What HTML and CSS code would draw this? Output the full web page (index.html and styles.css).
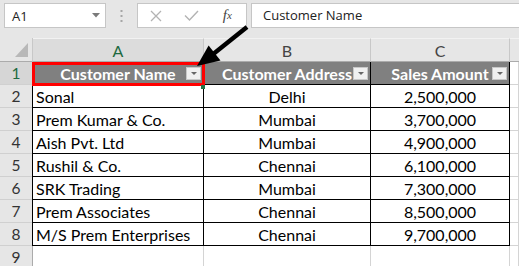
FILE: index.html
```html
<!DOCTYPE html>
<html>
<head>
<meta charset="utf-8">
<link rel="stylesheet" href="styles.css">
</head>
<body>
<div class="app">
  <div class="toolbar">
    <div class="namebox">
      <span>A1</span>
      <svg class="caret" width="8" height="5" viewBox="0 0 8 5"><path d="M0 0h8L4 4.5z" fill="#7a7a7a"/></svg>
    </div>
    <div class="dots">
      <svg width="3" height="12" viewBox="0 0 3 12"><rect x="0.5" y="0" width="2" height="2" fill="#a6a6a6"/><rect x="0.5" y="5" width="2" height="2" fill="#a6a6a6"/><rect x="0.5" y="10" width="2" height="2" fill="#a6a6a6"/></svg>
    </div>
    <div class="fxbtns">
      <span class="btn"><svg width="12" height="12" viewBox="0 0 12 12"><path d="M1 1L11 11M11 1L1 11" stroke="#b3b3b3" stroke-width="1.3" fill="none"/></svg></span>
      <span class="btn"><svg width="15" height="11" viewBox="0 0 15 11"><path d="M1 5.5L5.5 10L14 1" stroke="#b3b3b3" stroke-width="1.4" fill="none"/></svg></span>
      <span class="btn fx">f<sub>x</sub></span>
    </div>
    <div class="formula">Customer Name</div>
  </div>

  <div class="sheet">
    <div class="corner"></div>
    <div class="colhdr sel">A</div>
    <div class="colhdr">B</div>
    <div class="colhdr">C</div>
    <div class="colhdr last"></div>

    <div class="rowhdr sel">1</div>
    <div class="th">Customer Name<span class="dd"></span></div>
    <div class="th">Customer Address<span class="dd"></span></div>
    <div class="th">Sales Amount<span class="dd"></span></div>
    <div class="cell"></div>

    <div class="rowhdr">2</div>
    <div class="td a">Sonal</div>
    <div class="td b">Delhi</div>
    <div class="td c">2,500,000</div>
    <div class="cell"></div>

    <div class="rowhdr">3</div>
    <div class="td a">Prem Kumar &amp; Co.</div>
    <div class="td b">Mumbai</div>
    <div class="td c">3,700,000</div>
    <div class="cell"></div>

    <div class="rowhdr">4</div>
    <div class="td a">Aish Pvt. Ltd</div>
    <div class="td b">Mumbai</div>
    <div class="td c">4,900,000</div>
    <div class="cell"></div>

    <div class="rowhdr">5</div>
    <div class="td a">Rushil &amp; Co.</div>
    <div class="td b">Chennai</div>
    <div class="td c">6,100,000</div>
    <div class="cell"></div>

    <div class="rowhdr">6</div>
    <div class="td a">SRK Trading</div>
    <div class="td b">Mumbai</div>
    <div class="td c">7,300,000</div>
    <div class="cell"></div>

    <div class="rowhdr">7</div>
    <div class="td a">Prem Associates</div>
    <div class="td b">Chennai</div>
    <div class="td c">8,500,000</div>
    <div class="cell"></div>

    <div class="rowhdr">8</div>
    <div class="td a">M/S Prem Enterprises</div>
    <div class="td b">Chennai</div>
    <div class="td c">9,700,000</div>
    <div class="cell"></div>

    <div class="rowhdr">9</div>
    <div class="cell"></div>
    <div class="cell"></div>
    <div class="cell"></div>
    <div class="cell"></div>
  </div>

  <div class="redbox"></div>
  <div class="handle"></div>
  <svg class="arrow" width="519" height="266" viewBox="0 0 519 266">
    <line x1="247" y1="27" x2="212" y2="55" stroke="#000" stroke-width="4.5"/>
    <polygon points="197,66 208.6,45.5 220.5,60.5" fill="#000"/>
  </svg>
</div>
</body>
</html>
```

FILE: styles.css
```css
* { box-sizing: border-box; }

body {
  margin: 0;
  background: #e6e6e6;
  font-family: "Open Sans", "Noto Sans", sans-serif;
}

.app {
  position: relative;
  width: 519px;
  height: 266px;
  overflow: hidden;
  background: #e6e6e6;
}

/* ---------- formula bar ---------- */
.toolbar {
  display: flex;
  align-items: flex-start;
  height: 38px;
  padding: 3px 0 0 4px;
}

.namebox {
  width: 102px;
  height: 25px;
  background: #fff;
  border: 1px solid #c6c6c6;
  display: flex;
  align-items: center;
  justify-content: space-between;
  padding: 0 5px 0 7px;
  font-size: 13px;
  color: #222;
}

.dots {
  width: 31px;
  height: 25px;
  display: flex;
  align-items: center;
  justify-content: center;
}

.fxbtns {
  width: 110px;
  height: 25px;
  background: #fff;
  border: 1px solid #c6c6c6;
  display: flex;
  align-items: center;
}

.btn {
  width: 36px;
  display: flex;
  justify-content: center;
  align-items: center;
}

.fx {
  width: 38px;
  font-family: "Liberation Serif", serif;
  font-style: italic;
  font-size: 15px;
  color: #444;
  line-height: 1;
}

.fx sub {
  font-size: 11px;
  vertical-align: -1px;
}

.formula {
  flex: 1;
  margin-left: 4px;
  height: 25px;
  background: #fff;
  border: 1px solid #c6c6c6;
  border-right: none;
  padding-left: 11px;
  font-size: 13px;
  line-height: 23px;
  color: #222;
}

/* ---------- sheet ---------- */
.sheet {
  display: grid;
  grid-template-columns: 33px 171px 167px 139px 1fr;
  grid-template-rows: 24px repeat(9, 23px);
  font-family: "Lato", "Liberation Sans", sans-serif;
  font-size: 16px;
  background: #fff;
}

.corner {
  background: #e6e6e6;
  border-right: 1px solid #c8c8c8;
  border-bottom: 1px solid #ababab;
  position: relative;
}

.corner::after {
  content: "";
  position: absolute;
  right: 4px;
  bottom: 4px;
  width: 0;
  height: 0;
  border-left: 13px solid transparent;
  border-bottom: 14px solid #b8b8b8;
}

.colhdr {
  background: #e6e6e6;
  border-top: 1px solid #f2f2f2;
  border-right: 1px solid #c8c8c8;
  border-bottom: 1px solid #ababab;
  color: #444;
  display: flex;
  align-items: center;
  justify-content: center;
  font-size: 16px;
}

.colhdr.sel {
  background: #dcdcdc;
  color: #1e6a40;
}

.colhdr.last { border-right: none; }

.rowhdr {
  background: #e6e6e6;
  border-right: 1px solid #ababab;
  border-bottom: 1px solid #d0d0d0;
  color: #333;
  display: flex;
  align-items: center;
  justify-content: center;
  font-size: 15.5px;
}

.rowhdr.sel {
  background: #d6d6d6;
  color: #1e6a40;
}

.cell {
  background: #fff;
  border-right: 1px solid #d4d4d4;
  border-bottom: 1px solid #d4d4d4;
}

.th {
  position: relative;
  background: #808080;
  color: #fff;
  font-weight: 700;
  border-right: 1px solid #000;
  border-bottom: 1px solid #000;
  display: flex;
  align-items: center;
  justify-content: center;
  white-space: nowrap;
}

.dd {
  position: absolute;
  right: 2px;
  top: 5px;
  width: 15px;
  height: 13px;
  background: #f0f0f0;
  border: 1px solid #c8c8c8;
}

.dd::after {
  content: "";
  position: absolute;
  left: 4px;
  top: 4px;
  border-left: 3px solid transparent;
  border-right: 3px solid transparent;
  border-top: 3px solid #666;
}

.td {
  background: #fff;
  color: #000;
  border-right: 1px solid #000;
  border-bottom: 1px solid #000;
  display: flex;
  align-items: center;
  white-space: nowrap;
}

.td.a {
  padding-left: 3px;
  box-shadow: -1px 0 0 #000;
}

.td.b, .td.c { justify-content: center; }

/* ---------- annotations ---------- */
.redbox {
  position: absolute;
  left: 32px;
  top: 62px;
  width: 173px;
  height: 24px;
  border: 3px solid #ff0000;
}

.handle {
  position: absolute;
  left: 201px;
  top: 85px;
  width: 4px;
  height: 4px;
  background: #217346;
}

.arrow {
  position: absolute;
  left: 0;
  top: 0;
}
```
